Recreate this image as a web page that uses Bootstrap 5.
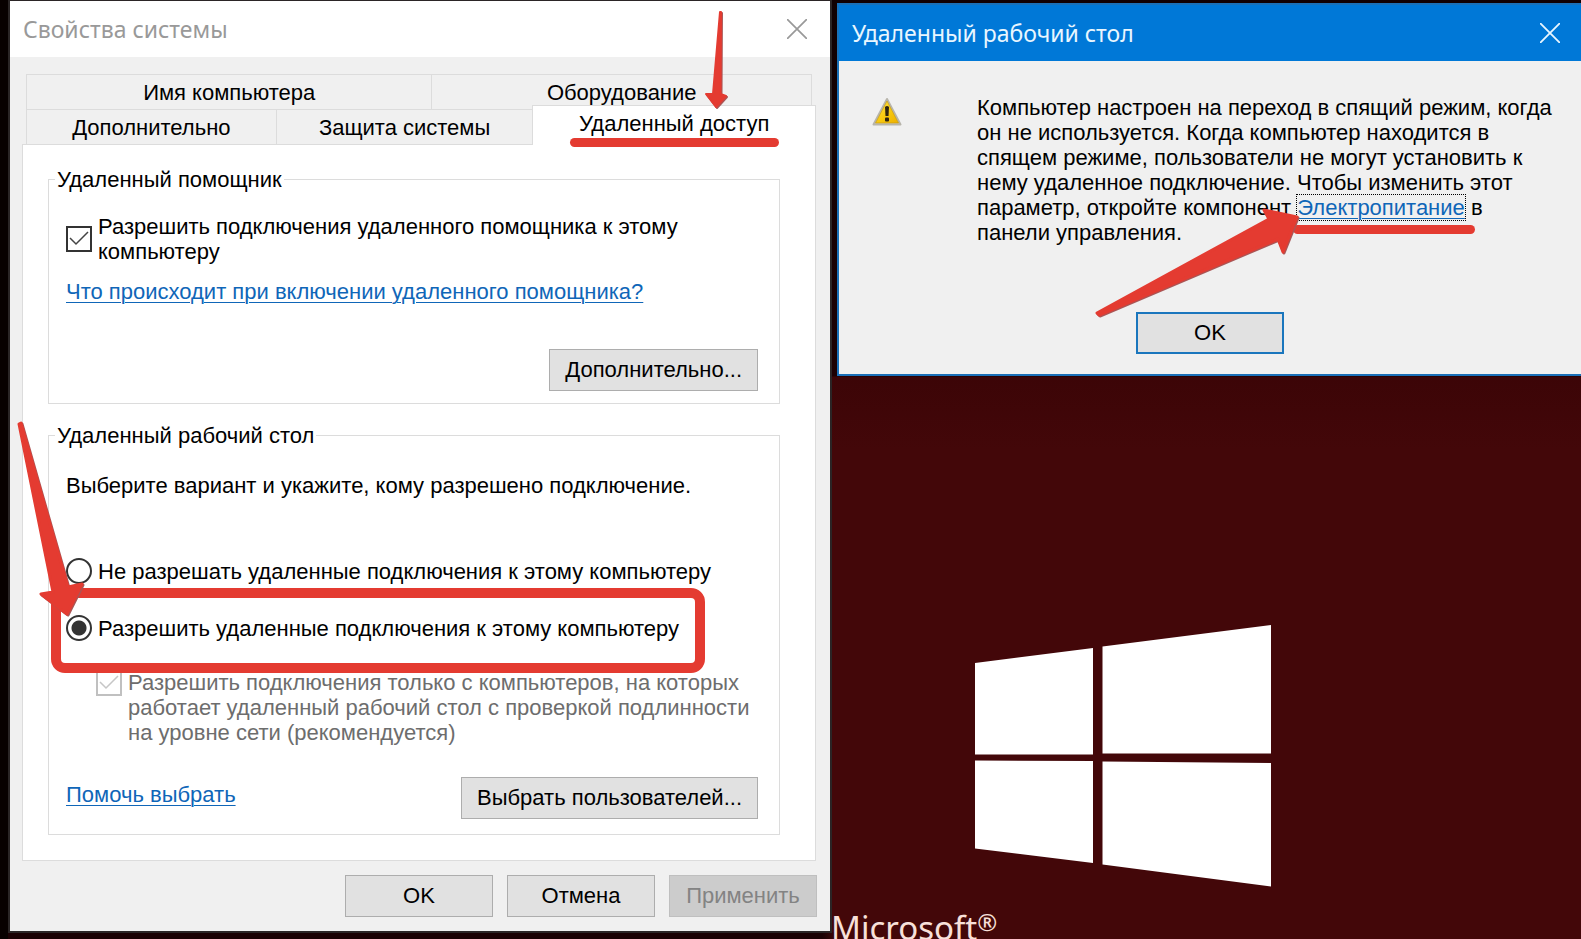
<!DOCTYPE html>
<html lang="ru">
<head>
<meta charset="utf-8">
<meta name="viewport" content="width=device-width, initial-scale=1">
<title>Свойства системы</title>
<link href="https://cdn.jsdelivr.net/npm/bootstrap@5.3.0/dist/css/bootstrap.min.css" rel="stylesheet">
<style>
  :root { --ui-red: #e43b31; --ui-line: #dcdcdc; --ui-link: #0f66b8; --ui-face: #f0f0f0; }
  body { font-family: "Liberation Sans", Arial, sans-serif; font-size: 22px; line-height: 25px; color: #000; background: #430709; overflow: hidden; }
  a { color: var(--ui-link); text-decoration-thickness: 1px; text-underline-offset: 3px; }
  .desktop { display: grid; grid-template-columns: 820fr 744fr; column-gap: 7px; height: 100vh; padding: 1px 0 0 10px; align-items: start;
    background: linear-gradient(90deg, #080000 8px, transparent 8px), linear-gradient(90deg, #1a0003 52%, transparent 53%) bottom/100% 7px no-repeat, linear-gradient(#100002 0, #1c0003 376px, #3c0507 377px, #430709 450px); }
  .win-title { font-family: "Noto Sans", "Open Sans", sans-serif; font-size: 23px; }
  .win-close { border: 0; background: none; padding: 0; line-height: 0; color: inherit; }
  .sys { background: var(--ui-face); box-shadow: 0 0 0 2px #2b2526; padding-bottom: 14px; }
  .sys-head { height: 56px; background: #fff; color: #999; padding: 0 23px 0 13px; }
  .sys-body { padding: 17px 14px 0 12px; }
  .tabs-a { margin: 0 4px; }
  .tabs-b { margin-left: 4px; }
  .tab-item { border: 1px solid var(--ui-line); border-bottom: 0; background: none; color: #000; padding: 0; height: 35px; min-width: 0; white-space: nowrap; }
  .tab-item + .tab-item { border-left: 0; }
  .tabs-a .tab-item:first-child { flex: 406 1 0; border-right: 0; }
  .tabs-a .tab-item:last-child { flex: 380 1 0; border-left: 1px solid var(--ui-line); }
  .tabs-b .tab-item:nth-child(1) { flex: 250 1 0; }
  .tabs-b .tab-item:nth-child(2) { flex: 257 1 0; border-right: 0; }
  .tabs-b .tab-item.current { flex: 283 1 0; background: #fff; height: 40px; margin: -4px 0 -1px; z-index: 1; border-left: 1px solid var(--ui-line); padding-bottom: 4px; }
  .tab-page { background: #fff; border: 1px solid var(--ui-line); padding: 22px 35px 25px 25px; }
  .group-box { border: 1px solid var(--ui-line); padding: 0 21px 0 17px; }
  .group-box legend { float: none; width: auto; font-size: 22px; line-height: 25px; margin: 0 0 0 -11px; padding: 0 2px; }
  .tick { appearance: none; flex: none; width: 26px; height: 26px; margin: 0; border: 2px solid #333; background: #fff center/22px 22px no-repeat; }
  .tick[type=radio] { border-radius: 50%; }
  .tick[type=radio]:checked { background: radial-gradient(circle, #333 7px, #fff 8px); }
  .tick[type=checkbox]:checked { background-image: url("data:image/svg+xml,%3Csvg xmlns='http://www.w3.org/2000/svg' viewBox='0 0 22 22'%3E%3Cpath d='M2 10l6 6L20 4' fill='none' stroke='%23444' stroke-width='1.5'/%3E%3C/svg%3E"); }
  .tick:disabled { opacity: .3; }
  .muted-text { color: #6d6d6d; }
  .push { min-width: 148px; height: 42px; padding: 0 15px 1px; border: 1px solid #adadad; border-radius: 0; background: #e1e1e1; color: #000; white-space: nowrap; }
  .push:disabled { background: #ccc; border-color: #bfbfbf; color: #838383; }
  .push-default { border: 2px solid #1a76bd; }
  .marker-line { position: absolute; height: 9px; border-radius: 5px; background: var(--ui-red); }
  .marker-frame { position: absolute; z-index: 1; inset: -27px 53px -32px -15px; border: 10px solid var(--ui-red); border-radius: 14px; pointer-events: none; }
  .arrow { position: absolute; fill: var(--ui-red); stroke: var(--ui-red); stroke-linejoin: round; pointer-events: none; overflow: visible; filter: drop-shadow(1px 1px 0 #a55); z-index: 2; }
  .dlg { margin-top: 2px; background: var(--ui-face); border: 2px solid #1a70b8; border-right: 0; padding-bottom: 20px; }
  .dlg-head { height: 56px; background: #0078d7; color: #e8f6ff; padding: 0 21px 0 13px; }
  .dlg-body { padding: 34px 20px 0 33px; }
  .dlg-text { margin: 0 0 67px 75px; white-space: nowrap; }
  .focus-link { outline: 1px dotted #000; }
  .logo { display: block; margin: 249px 0 0 138px; }
  .brand { font-family: "Noto Sans", "Open Sans", sans-serif; font-size: 33px; line-height: 40px; color: #f8e0da; margin: 21px 0 0 -6px; }
  .brand sup { font-size: 24px; top: -9px; line-height: 0; }
  .assist { margin-top: 22px; column-gap: 6px; }
  .assist-link { margin-top: 15px; }
  .assist-more { margin-top: 45px; padding-bottom: 4px; }
  .remote { margin-top: 19px; padding-bottom: 15px; }
  .remote-intro { margin: 25px 0 60px; }
  .opt { column-gap: 6px; }
  .opt-allow { margin-top: 31px; }
  .opt-nla { margin: 29px 0 32px 30px; }
  .remote-end a { padding-top: 5px; }
  .sys-foot { gap: 14px; margin: 14px -1px 0 0; }
</style>
</head>
<body>
<main class="desktop">
  <section class="sys" aria-label="Свойства системы">
    <header class="sys-head d-flex align-items-center justify-content-between">
      <span class="win-title">Свойства системы</span>
      <button class="win-close" type="button" aria-label="Закрыть"><svg width="20" height="20" viewBox="0 0 20 20" stroke="currentColor" stroke-width="1.7"><path d="M0 0L20 20M20 0L0 20"/></svg></button>
    </header>
    <div class="sys-body">
      <div class="tabs-a d-flex">
        <button class="tab-item" type="button">Имя компьютера</button>
        <button class="tab-item" type="button">Оборудование</button>
      </div>
      <div class="tabs-b d-flex">
        <button class="tab-item" type="button">Дополнительно</button>
        <button class="tab-item" type="button">Защита системы</button>
        <button class="tab-item current position-relative" type="button">Удаленный доступ
          <span class="marker-line" style="left:37px;right:36px;top:32px"></span>
          <svg class="arrow" style="left:172px;top:-96px" width="22" height="98" viewBox="0 0 22 98"><path d="M15 2H16L15.5 84L21 86L11 97L1 84L8 84Z" stroke-width="2"/></svg>
        </button>
      </div>
      <div class="tab-page">
        <fieldset class="group-box pb-2">
          <legend>Удаленный помощник</legend>
          <div class="d-flex align-items-center assist">
            <input class="tick" type="checkbox" id="assist" checked>
            <label for="assist">Разрешить подключения удаленного помощника к этому<br>компьютеру</label>
          </div>
          <a class="d-inline-block assist-link" href="#">Что происходит при включении удаленного помощника?</a>
          <div class="text-end assist-more"><button class="push" type="button">Дополнительно...</button></div>
        </fieldset>
        <fieldset class="group-box remote">
          <legend>Удаленный рабочий стол</legend>
          <p class="remote-intro">Выберите вариант и укажите, кому разрешено подключение.</p>
          <div class="d-flex align-items-center opt">
            <input class="tick" type="radio" name="rdp" id="deny">
            <label for="deny">Не разрешать удаленные подключения к этому компьютеру</label>
          </div>
          <div class="d-flex align-items-center opt opt-allow position-relative">
            <input class="tick" type="radio" name="rdp" id="allow" checked>
            <label for="allow">Разрешить удаленные подключения к этому компьютеру</label>
            <span class="marker-frame"></span>
            <svg class="arrow" style="left:-50px;top:-194px" width="68" height="196" viewBox="0 0 68 196"><path d="M3 3L5 2L52 166L66 163L51 193L25 173L37 171Z" stroke-width="3"/></svg>
          </div>
          <div class="d-flex align-items-start opt opt-nla">
            <input class="tick" type="checkbox" id="nla" checked disabled>
            <label class="muted-text" for="nla">Разрешить подключения только с компьютеров, на которых<br>работает удаленный рабочий стол с проверкой подлинности<br>на уровне сети (рекомендуется)</label>
          </div>
          <div class="d-flex align-items-start justify-content-between remote-end">
            <a href="#">Помочь выбрать</a>
            <button class="push" type="button">Выбрать пользователей...</button>
          </div>
        </fieldset>
      </div>
      <footer class="d-flex justify-content-end sys-foot">
        <button class="push" type="button">OK</button>
        <button class="push" type="button">Отмена</button>
        <button class="push" type="button" disabled>Применить</button>
      </footer>
    </div>
  </section>

  <div>
    <section class="dlg" aria-label="Удаленный рабочий стол">
      <header class="dlg-head d-flex align-items-center justify-content-between">
        <span class="win-title">Удаленный рабочий стол</span>
        <button class="win-close" type="button" aria-label="Закрыть"><svg width="20" height="20" viewBox="0 0 20 20" stroke="currentColor" stroke-width="1.8"><path d="M0 0L20 20M20 0L0 20"/></svg></button>
      </header>
      <div class="dlg-body d-flex align-items-start">
        <svg class="flex-shrink-0" width="30" height="31" viewBox="0 -1 30 31" role="img" aria-label="Внимание">
          <defs><linearGradient id="warn" x1="0" y1="0" x2="1" y2="1"><stop offset="0" stop-color="#ffe95a"/><stop offset=".5" stop-color="#f8cb10"/><stop offset="1" stop-color="#eeb000"/></linearGradient></defs>
          <path d="M15 3L28.500 28.500H1.500Z" fill="#d8d5c8" stroke="#b8b5ab" stroke-width="2" stroke-linejoin="round"/>
          <path d="M15 5L26.500 27H3.500Z" fill="url(#warn)" stroke="#c99c10" stroke-width=".7"/>
          <path d="M13 11Q15 9 17 11L16.500 20H13.500Z" fill="#2d2410"/><rect x="13" y="21.500" width="4" height="4" rx="1" fill="#2d2410"/>
        </svg>
        <p class="dlg-text">Компьютер настроен на переход в спящий режим, когда<br>он не используется. Когда компьютер находится в<br>спящем режиме, пользователи не могут установить к<br>нему удаленное подключение. Чтобы изменить этот<br>параметр, откройте компонент <span class="position-relative d-inline-block"><a class="focus-link" href="#">Электропитание</a><span class="marker-line" style="left:-4px;right:-10px;top:30px"></span><svg class="arrow" style="left:-202px;top:13px" width="205" height="109" viewBox="0 0 205 109"><path d="M2 105L174 11L169 2L202 9L188 44L183 31L4 107Z" stroke-width="3"/></svg></span> в<br>панели управления.</p>
      </div>
      <div class="text-center"><button class="push push-default" type="button">OK</button></div>
    </section>
    <svg class="logo" width="296" height="262" viewBox="0 0 296 262" fill="#fff" role="img" aria-label="Windows"><path d="M0 38L118 23V129.500H0ZM127.500 21.500L296 0V128.500H127.500ZM0 135.500L118 136V238L0 223.500ZM127.500 136.500L296 138V261.500L127.500 239.500Z"/></svg>
    <div class="brand">Microsoft<sup>®</sup></div>
  </div>
</main>
<script src="https://cdn.jsdelivr.net/npm/bootstrap@5.3.0/dist/js/bootstrap.bundle.min.js"></script>
</body>
</html>
